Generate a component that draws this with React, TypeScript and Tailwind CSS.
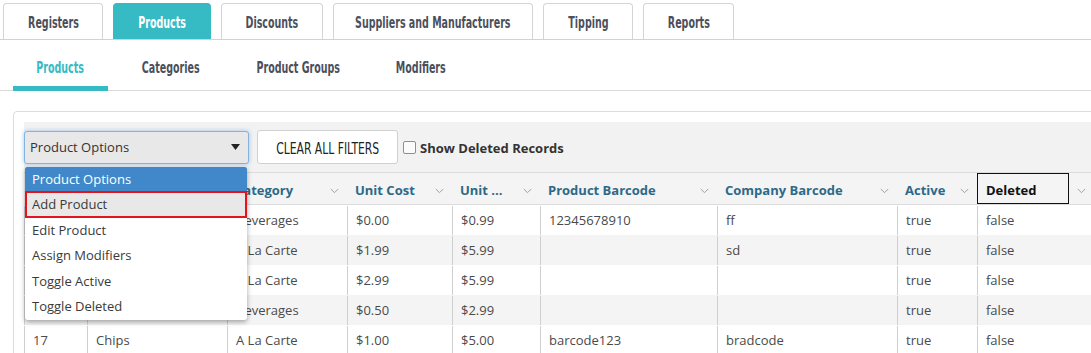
import React from "react";

const cond = "font-['DejaVu_Sans_Condensed','Liberation_Sans_Narrow',sans-serif]";
const open = "font-['Open_Sans',sans-serif]";

const topTabs = [
  { label: "Registers", w: "w-[100px]" },
  { label: "Products", w: "w-[98px]", active: true },
  { label: "Discounts", w: "w-[102px]" },
  { label: "Suppliers and Manufacturers", w: "w-[200px]" },
  { label: "Tipping", w: "w-[90px]" },
  { label: "Reports", w: "w-[91px]" },
];

const subTabs = [
  { label: "Products", w: "w-[95px]", active: true },
  { label: "Categories", w: "w-[106px]" },
  { label: "Product Groups", w: "w-[128px]" },
  { label: "Modifiers", w: "w-[98px]" },
];

const headers = ["", "", "Category", "Unit Cost", "Unit ...", "Product Barcode", "Company Barcode", "Active"];

const rows = [
  ["", "", "Beverages", "$0.00", "$0.99", "12345678910", "ff", "true", "false"],
  ["", "", "A La Carte", "$1.99", "$5.99", "", "sd", "true", "false"],
  ["", "", "A La Carte", "$2.99", "$5.99", "", "", "true", "false"],
  ["", "", "Beverages", "$0.50", "$2.99", "", "", "true", "false"],
  ["17", "Chips", "A La Carte", "$1.00", "$5.00", "barcode123", "bradcode", "true", "false"],
];

const gridCols = "grid grid-cols-[63px_140px_120px_105px_88px_177px_180px_80px_117px_200px]";

function Chevron() {
  return (
    <svg width="9" height="6" viewBox="0 0 9 6" className="shrink-0">
      <path d="M0.8 1L4.5 4.7L8.2 1" fill="none" stroke="#a0a0a0" strokeWidth="1" />
    </svg>
  );
}

export default function App() {
  return (
    <div className={`w-[1091px] h-[353px] overflow-hidden bg-white ${open}`}>
      {/* top tabs */}
      <div className="flex gap-[10px] pl-[3px] pt-[3px] border-b border-[#d2d2d2]">
        {topTabs.map((t) => (
          <div
            key={t.label}
            className={`${t.w} h-[36px] pt-[2px] flex items-center justify-center rounded-t-[4px] border border-b-0 ${cond} font-bold text-[16px] ${
              t.active ? "bg-[#36bac4] border-[#36bac4] text-white" : "bg-white border-[#d4d4d4] text-[#4b4f5c]"
            }`}
          >
            <span className="inline-block whitespace-nowrap scale-x-[0.66]">{t.label}</span>
          </div>
        ))}
      </div>

      {/* sub tabs */}
      <div className="flex gap-[10px] pl-[13px] h-[51px] border-b border-[#d9d9d9]">
        {subTabs.map((t) => (
          <div
            key={t.label}
            className={`${t.w} h-[51px] pt-[10px] flex items-center justify-center border-b-[5px] ${cond} font-bold text-[16px] ${
              t.active ? "border-[#36bac4] text-[#36bac4]" : "border-transparent text-[#4b4f5c]"
            }`}
          >
            <span className="inline-block whitespace-nowrap scale-x-[0.66]">{t.label}</span>
          </div>
        ))}
      </div>

      {/* panel */}
      <div className="mt-[20px] ml-[13px] w-[1300px] border border-[#dcdcdc] rounded-tl-[4px] pt-[10px] pl-[10px]">
        {/* toolbar */}
        <div className="h-[50px] bg-[#f2f2f2] flex items-center">
          <div className="relative">
            <div className="w-[225px] h-[33px] bg-[#e8e8e8] border border-[#86b3de] rounded-[3px] shadow-[0_0_4px_rgba(80,150,230,0.55)] flex items-center justify-between pl-[5px] pr-[8px] text-[13px] text-[#333]">
              <span className="pt-[2px]">Product Options</span>
              <svg width="9" height="6" viewBox="0 0 9 6">
                <polygon points="0,0 9,0 4.5,6" fill="#222" />
              </svg>
            </div>
            {/* open dropdown list */}
            <div className="absolute left-[1px] top-[36px] w-[222px] z-10 bg-white rounded-b-[3px] shadow-[0_2px_5px_rgba(0,0,0,0.35)] text-[13px] text-[#3a3a3a]">
              <div className="h-[24px] pt-[2px] bg-[#4088c9] text-white flex items-center pl-[7px] rounded-t-[2px]">Product Options</div>
              <div className="h-[27px] pt-[1px] bg-[#e8e8e8] border-2 border-[#e3141b] flex items-center pl-[5px]">Add Product</div>
              {["Edit Product", "Assign Modifiers", "Toggle Active", "Toggle Deleted"].map((o) => (
                <div key={o} className="h-[25.5px] flex items-center pl-[7px]">
                  {o}
                </div>
              ))}
            </div>
          </div>
          <button className={`ml-[8px] w-[141px] h-[34px] pt-[3px] bg-white border border-[#d0d0d0] rounded-[3px] ${cond} text-[16px] text-[#222]`}>
            <span className="inline-block whitespace-nowrap scale-x-[0.75]">CLEAR ALL FILTERS</span>
          </button>
          <span className="ml-[5px] w-[13px] h-[13px] border border-[#8f8f8f] rounded-[2px] bg-[#fbfbfb]" />
          <span className="ml-[4px] pt-[4px] text-[13px] font-bold text-[#333]">Show Deleted Records</span>
        </div>

        {/* table header */}
        <div className={`${gridCols} h-[33px] pt-[5px] bg-[#f4f4f4] border-y border-[#dcdcdc]`}>
          {headers.map((h, i) => (
            <div key={i} className="flex items-center justify-between pl-[8px] pr-[8px] text-[13px] font-bold text-[#2d6987]">
              <span>{h}</span>
              <Chevron />
            </div>
          ))}
          <div className="flex items-center justify-between pr-[8px] -mt-[5px]">
            <div className="w-[92px] h-full pt-[5px] border-[1.5px] border-[#111] flex items-center pl-[8px] text-[13px] font-bold text-[#111]">
              Deleted
            </div>
            <div className="pt-[5px]">
              <Chevron />
            </div>
          </div>
          <div />
        </div>

        {/* table rows */}
        {rows.map((r, i) => (
          <div key={i} className={`${gridCols} h-[30px] pt-[1px] ${i % 2 === 1 ? "bg-[#f4f4f4]" : "bg-white"}`}>
            {r.map((c, j) => (
              <div key={j} className="flex items-center pl-[8px] border-l border-[#cfcfcf] text-[13px] text-[#4a4a4a]">
                {c}
              </div>
            ))}
            <div className="border-l border-[#cfcfcf]" />
          </div>
        ))}
      </div>
    </div>
  );
}
